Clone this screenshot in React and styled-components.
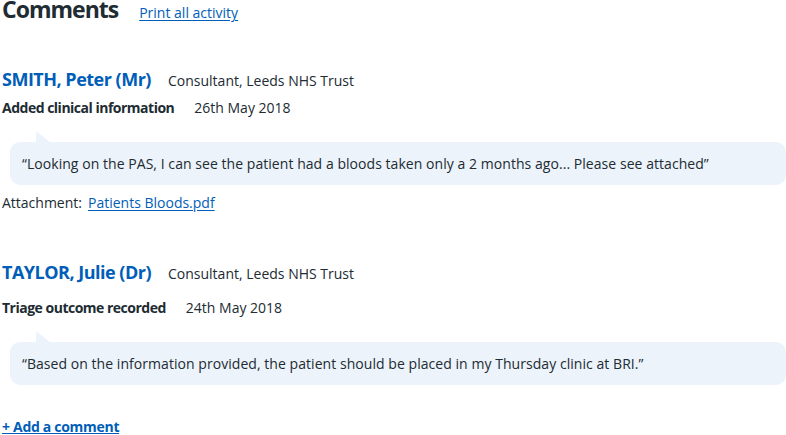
import styled, { createGlobalStyle } from "styled-components"

const GlobalStyle = createGlobalStyle`
    body {
        margin: 0;
        font-family: "Open Sans", "Noto Sans", sans-serif;
        color: #212b32;
        background: #fff;
    }
`

const Page = styled.div`
    width: 786px;
    padding-left: 2px;
    box-sizing: border-box;
`

const Header = styled.div`
    display: flex;
    align-items: baseline;
    gap: 21px;
    margin-top: -3px;
    line-height: 24px;
`

const Title = styled.h2`
    margin: 0;
    font-size: 23px;
    font-weight: 700;
    letter-spacing: -1px;
`

const Link = styled.a`
    color: #005eb8;
    font-size: 14px;
    line-height: 20px;
    font-weight: ${props => props.bold ? 700 : 400};
    letter-spacing: ${props => props.bold ? "-0.3px" : "0"};
    text-decoration: underline;
    text-underline-offset: ${props => props.bold ? 1 : 2}px;
    cursor: pointer;
`

const Entry = styled.div`
    margin-top: ${props => props.top}px;
`

const NameRow = styled.div`
    display: flex;
    align-items: baseline;
    line-height: 24px;
`

const Name = styled.span`
    min-width: 166px;
    color: #005eb8;
    font-size: 18px;
    font-weight: 700;
    letter-spacing: -0.5px;
`

const Role = styled.span`
    font-size: 14px;
`

const ActionRow = styled.div`
    display: flex;
    align-items: baseline;
    gap: 20px;
    font-size: 14px;
    line-height: 20px;
    margin-top: ${props => props.gap}px;
`

const Action = styled.span`
    font-weight: 700;
    letter-spacing: -0.5px;
`

const Bubble = styled.div`
    position: relative;
    margin: 24px 0 0 8px;
    background: #edf3fb;
    border-radius: 10px;
    padding: 11px 12px;
    font-size: 14px;
    line-height: 21px;
    letter-spacing: 0.05px;

    &::before {
        content: "";
        position: absolute;
        left: 26px;
        top: -11px;
        border-right: 14px solid transparent;
        border-bottom: 11px solid #edf3fb;
    }
`

const AttachRow = styled.div`
    display: flex;
    gap: 6px;
    font-size: 14px;
    line-height: 20px;
    margin-top: 8px;
`

const comments = [
    {
        id: 1,
        name: "SMITH, Peter (Mr)",
        role: "Consultant, Leeds NHS Trust",
        action: "Added clinical information",
        date: "26th May 2018",
        text: "“Looking on the PAS, I can see the patient had a bloods taken only a 2 months ago... Please see attached”",
        attachment: "Patients Bloods.pdf",
        top: 44,
        gap: 5,
    },
    {
        id: 2,
        name: "TAYLOR, Julie (Dr)",
        role: "Consultant, Leeds NHS Trust",
        action: "Triage outcome recorded",
        date: "24th May 2018",
        text: "“Based on the information provided, the patient should be placed in my Thursday clinic at BRI.”",
        top: 47,
        gap: 12,
    },
]

const App = () => {
    return (
        <Page>
            <GlobalStyle />
            <Header>
                <Title>Comments</Title>
                <Link>Print all activity</Link>
            </Header>
            {comments.map(item => (
                <Entry key={item.id} top={item.top}>
                    <NameRow>
                        <Name>{item.name}</Name>
                        <Role>{item.role}</Role>
                    </NameRow>
                    <ActionRow gap={item.gap}>
                        <Action>{item.action}</Action>
                        <span>{item.date}</span>
                    </ActionRow>
                    <Bubble>{item.text}</Bubble>
                    {item.attachment && (
                        <AttachRow>
                            Attachment: <Link>{item.attachment}</Link>
                        </AttachRow>
                    )}
                </Entry>
            ))}
            <Entry top={30}>
                <Link bold>+ Add a comment</Link>
            </Entry>
        </Page>
    )
}

export default App
